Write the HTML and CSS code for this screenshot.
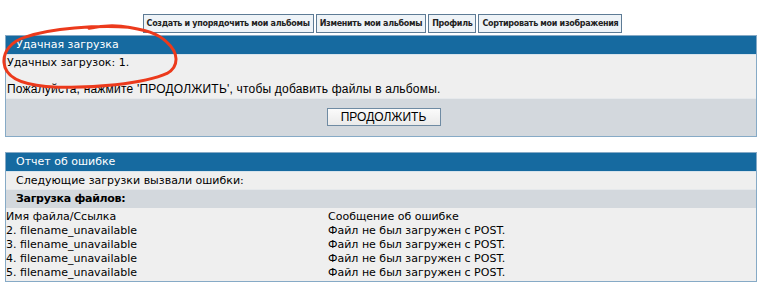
FILE: index.html
```html
<!DOCTYPE html>
<html lang="ru">
<head>
    <meta charset="UTF-8">
    <title>Удачная загрузка</title>
    <link rel="stylesheet" href="styles.css">
</head>
<body>
    <div class="nav">
        <a class="nav-btn" href="#">Создать и упорядочить мои альбомы</a>
        <a class="nav-btn" href="#">Изменить мои альбомы</a>
        <a class="nav-btn" href="#">Профиль</a>
        <a class="nav-btn" href="#">Сортировать мои изображения</a>
    </div>

    <div class="panel first">
        <div class="head">Удачная загрузка</div>
        <div class="row count">Удачных загрузок: 1.</div>
        <div class="row empty"></div>
        <div class="row note">Пожалуйста, нажмите 'ПРОДОЛЖИТЬ', чтобы добавить файлы в альбомы.</div>
        <div class="foot">
            <button class="go" type="button">ПРОДОЛЖИТЬ</button>
        </div>
        <!-- red marker drawn around the title -->
        <svg class="scribble" width="190" height="71" viewBox="0 0 190 66" preserveAspectRatio="none">
            <path d="M128 3 C95 1 50 4 25 12 C10 16 2 26 3 36 C4 48 18 56 45 58 C90 61 145 55 166 46 C179 39 177 26 166 17 C157 9 145 5 120 2 C110 1 98 2 88 4"
                  fill="none" stroke="#ec3a1c" stroke-width="3" stroke-linecap="round" vector-effect="non-scaling-stroke"/>
        </svg>
    </div>

    <div class="panel second">
        <div class="head">Отчет об ошибке</div>
        <div class="row intro">Следующие загрузки вызвали ошибки:</div>
        <div class="section">Загрузка файлов:</div>
        <div class="list">
            <div class="item"><span class="name">Имя файла/Ссылка</span><span>Сообщение об ошибке</span></div>
            <div class="item"><span class="name">2. filename_unavailable</span><span>Файл не был загружен с POST.</span></div>
            <div class="item"><span class="name">3. filename_unavailable</span><span>Файл не был загружен с POST.</span></div>
            <div class="item"><span class="name">4. filename_unavailable</span><span>Файл не был загружен с POST.</span></div>
            <div class="item"><span class="name">5. filename_unavailable</span><span>Файл не был загружен с POST.</span></div>
        </div>
    </div>
</body>
</html>
```

FILE: styles.css
```css
body {
    margin: 0;
    background: #fff;
    font-family: "DejaVu Sans", Verdana, sans-serif;
    font-size: 11px;
    color: #000;
}
.nav {
    display: flex;
    justify-content: center;
    gap: 2px;
    padding-top: 14px;
}
.nav-btn {
    display: block;
    height: 17px;
    line-height: 17px;
    padding: 0 3px;
    border: 1px solid #5d7b95;
    background: #eef3f7;
    color: #222;
    text-decoration: none;
    font-family: "DejaVu Sans", sans-serif;
    font-size: 8px;
    font-weight: bold;
    letter-spacing: -0.3px;
}
.panel {
    position: relative;
    width: 750px;
    margin-left: 5px;
    border: 1px solid #86aac6;
    background: #efefef;
}
.first {
    margin-top: 2px;
}
.second {
    margin-top: 15px;
}
.head {
    height: 18px;
    line-height: 18px;
    padding-left: 10px;
    background: #166aa0;
    color: #fff;
    font-size: 11px;
    border-bottom: 1px solid #d7e3ec;
}
.row {
    height: 16px;
    line-height: 16px;
    padding-left: 1px;
}
.count {
    font-size: 11px;
}
.empty {
    height: 10px;
}
.note {
    font-family: "Liberation Sans", Arial, sans-serif;
    font-size: 12px;
    letter-spacing: 0.2px;
    height: 17px;
}
.foot {
    display: flex;
    justify-content: center;
    align-items: center;
    height: 37px;
    background: #d3d8dd;
    border-top: 1px solid #e6e9ec;
}
.go {
    width: 114px;
    height: 18px;
    padding: 0;
    border: 1px solid #6f8ba3;
    background: linear-gradient(#fbfbfb, #eaeaea);
    font-family: "Liberation Sans", Arial, sans-serif;
    font-size: 12px;
    color: #000;
    margin-left: 5px;
    margin-top: -1px;
}
.scribble {
    position: absolute;
    left: -5px;
    top: -12px;
}
.intro {
    padding-left: 10px;
    height: 17px;
    line-height: 17px;
    font-size: 11px;
}
.section {
    height: 18px;
    line-height: 18px;
    padding-left: 10px;
    background: #d3d8dd;
    font-size: 11px;
    font-weight: bold;
    letter-spacing: -0.3px;
    border-top: 1px solid #e6e9ec;
}
.list {
    padding-top: 2px;
    padding-bottom: 1px;
}
.item {
    display: flex;
    height: 14px;
    line-height: 14px;
    font-size: 11px;
}
.name {
    width: 322px;
}
```
